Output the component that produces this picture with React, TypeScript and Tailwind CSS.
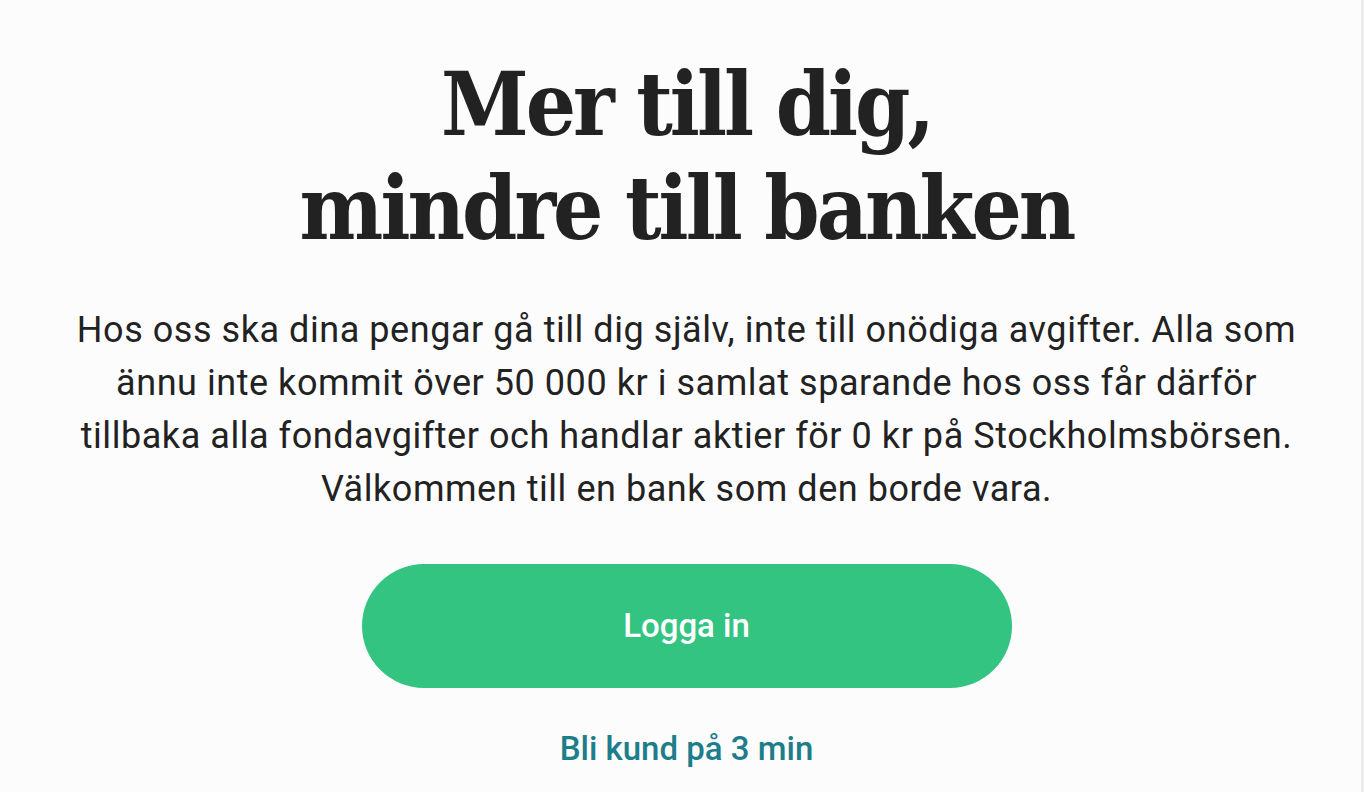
import React from 'react';

const App = () => {
    return (
        <div className="min-h-[792px] w-full bg-[#fcfcfc] flex border-r-[3px] border-[#ececec]">
            <section className="w-full flex flex-col items-center pt-[52px] pl-[12px] font-['Roboto',sans-serif] text-[#222]">
                {/* Headline */}
                <h1 className="text-center text-[88px] leading-[104px] font-bold tracking-[-3px] font-stretch-condensed font-['DejaVu_Serif_Condensed','DejaVu_Serif',serif] text-[#222]">
                    Mer till dig,<br/>mindre till banken
                </h1>

                {/* Intro */}
                <p className="mt-[44px] text-center text-[36px] leading-[53px] tracking-[0.55px] text-[#222]">
                    Hos oss ska dina pengar gå till dig själv, inte till onödiga avgifter. Alla som<br/>
                    ännu inte kommit över 50 000 kr i samlat sparande hos oss får därför<br/>
                    tillbaka alla fondavgifter och handlar aktier för 0 kr på Stockholmsbörsen.<br/>
                    Välkommen till en bank som den borde vara.
                </p>

                <button type="button"
                        className="mt-[48px] w-[650px] h-[124px] rounded-full bg-[#33c482] text-white text-[33px] font-medium">
                    Logga in
                </button>

                <a href="#" className="mt-[36px] text-[33px] font-medium text-[#1d7d8a]">
                    Bli kund på 3 min
                </a>
            </section>
        </div>
    );
};

export default App;
